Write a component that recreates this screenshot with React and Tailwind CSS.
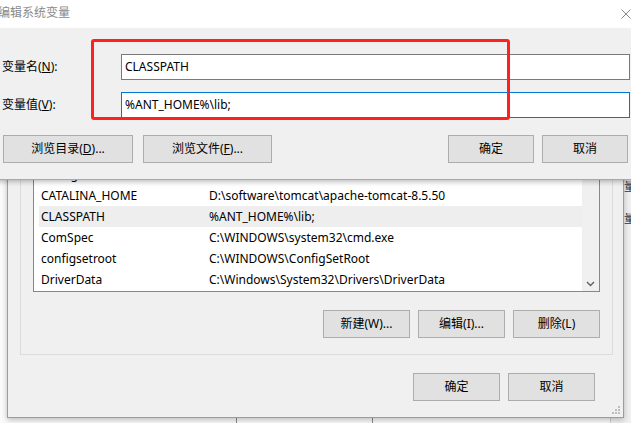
import React from 'react';

const rows = [
    ['ANT_HOME', 'D:\\software\\apache-ant-1.10.7'],
    ['Config', '1'],
    ['CATALINA_HOME', 'D:\\software\\tomcat\\apache-tomcat-8.5.50'],
    ['CLASSPATH', '%ANT_HOME%\\lib;', true],
    ['ComSpec', 'C:\\WINDOWS\\system32\\cmd.exe'],
    ['configsetroot', 'C:\\WINDOWS\\ConfigSetRoot'],
    ['DriverData', 'C:\\Windows\\System32\\Drivers\\DriverData'],
];

function WinButton({ children, className = '' }) {
    return (
        <div
            className={`h-[28px] flex items-center justify-center border border-[#adadad] bg-[#e1e1e1] text-[12px] text-black ${className}`}
        >
            {children}
        </div>
    );
}

export default function App() {
    return (
        <div className="relative w-[631px] h-[423px] overflow-hidden bg-[#fbfbfb] font-['Noto_Sans','Noto_Sans_CJK_SC',sans-serif] leading-none">
            {/* window behind, right edge */}
            <div className="absolute left-[610px] top-[150px] w-[40px] h-[280px] bg-[#f0f0f0] border-l border-[#d0d0d0]">
                <div className="absolute left-[13px] top-[31px] w-[8px] overflow-hidden text-[12px] text-[#333]">量</div>
                <div className="absolute left-[13px] top-[63px] w-[8px] overflow-hidden text-[12px] text-[#333]">量</div>
            </div>
            <div className="absolute left-[236px] top-[416px] w-px h-[10px] bg-[#8a8a8a]" />
            <div className="absolute left-[372px] top-[416px] w-px h-[10px] bg-[#8a8a8a]" />

            {/* environment variables dialog (background) */}
            <div className="absolute left-[7px] top-[90px] w-[617px] h-[328px] flex flex-col border border-[#9c9c9c] bg-[#f0f0f0] shadow-[0_2px_6px_rgba(0,0,0,0.25)]">
                <div className="mt-[20px] ml-[12px] mr-[10px] border border-[#dcdcdc] pt-[9px] px-[12px] pb-[16px]">
                    <div className="flex border border-[#828790] bg-white h-[171px]">
                        <div className="flex-1 pl-[5px] pb-px flex flex-col justify-end">
                            {rows.map(([name, value, selected]) => (
                                <div
                                    key={name}
                                    className={`h-[21px] flex items-center pl-[2px] text-[12px] text-black whitespace-nowrap ${selected ? 'bg-[#eeeeee]' : ''}`}
                                >
                                    <span className="w-[168px]">{name}</span>
                                    <span>{value}</span>
                                </div>
                            ))}
                        </div>
                        <div className="w-[17px] bg-[#f0f0f0] flex flex-col justify-end items-center pb-[4px]">
                            <svg width="9" height="6" viewBox="0 0 9 6">
                                <path d="M1 1 L4.5 4.5 L8 1" fill="none" stroke="#606060" strokeWidth="1.4" />
                            </svg>
                        </div>
                    </div>
                    <div className="mt-[18px] flex justify-end gap-[8px]">
                        <WinButton className="w-[87px]">新建(W)...</WinButton>
                        <WinButton className="w-[87px]">编辑(I)...</WinButton>
                        <WinButton className="w-[87px]">删除(L)</WinButton>
                    </div>
                </div>
                <div className="mt-[18px] mr-[28px] flex justify-end gap-[8px]">
                    <WinButton className="w-[87px]">确定</WinButton>
                    <WinButton className="w-[87px]">取消</WinButton>
                </div>
                <svg className="absolute right-[2px] bottom-[2px]" width="9" height="9" viewBox="0 0 9 9">
                    <rect x="6" y="0" width="2" height="2" fill="#bdbdbd" />
                    <rect x="3" y="3" width="2" height="2" fill="#bdbdbd" />
                    <rect x="6" y="3" width="2" height="2" fill="#bdbdbd" />
                    <rect x="0" y="6" width="2" height="2" fill="#bdbdbd" />
                    <rect x="3" y="6" width="2" height="2" fill="#bdbdbd" />
                    <rect x="6" y="6" width="2" height="2" fill="#bdbdbd" />
                </svg>
            </div>

            {/* edit system variable dialog (front) */}
            <div className="absolute left-[-10px] top-0 w-[651px] h-[180px] flex flex-col bg-[#f0f0f0] border-b border-[#a8a8a8] shadow-[0_2px_5px_rgba(0,0,0,0.25)]">
                <div className="h-[28px] shrink-0 bg-white flex items-center justify-between pl-[8px] pr-[10px] pb-[3px]">
                    <span className="text-[12px] text-[#8a8a8a]">编辑系统变量</span>
                    <svg width="10" height="10" viewBox="0 0 10 10" className="mt-[2px]">
                        <path d="M0.5 0.5 L9.5 9.5 M9.5 0.5 L0.5 9.5" stroke="#8a8a8a" strokeWidth="1" />
                    </svg>
                </div>
                <div className="pt-[26px] pl-[12px] pr-[11px] flex flex-col">
                    <div className="flex items-center">
                        <span className="w-[119px] text-[12px] text-black">变量名(<u>N</u>):</span>
                        <div className="flex-1 h-[26px] flex items-center pl-[3px] border border-[#7a7a7a] bg-white text-[12px] text-black">
                            CLASSPATH
                        </div>
                    </div>
                    <div className="mt-[12px] flex items-center">
                        <span className="w-[119px] text-[12px] text-black">变量值(<u>V</u>):</span>
                        <div className="flex-1 h-[26px] flex items-center pl-[3px] border border-[#0078d7] bg-white text-[12px] text-black">
                            %ANT_HOME%\lib;
                        </div>
                    </div>
                    <div className="mt-[17px] flex justify-between pl-[1px] pr-[2px]">
                        <div className="flex gap-[10px]">
                            <WinButton className="w-[130px]"><span>浏览目录(<u>D</u>)...</span></WinButton>
                            <WinButton className="w-[129px]"><span>浏览文件(<u>F</u>)...</span></WinButton>
                        </div>
                        <div className="flex gap-[8px]">
                            <WinButton className="w-[86px]">确定</WinButton>
                            <WinButton className="w-[86px]">取消</WinButton>
                        </div>
                    </div>
                </div>
            </div>

            {/* red annotation box */}
            <div className="absolute left-[91px] top-[39px] w-[419px] h-[81px] border-[3px] border-[#ff2020] rounded-[3px]" />
        </div>
    );
}
